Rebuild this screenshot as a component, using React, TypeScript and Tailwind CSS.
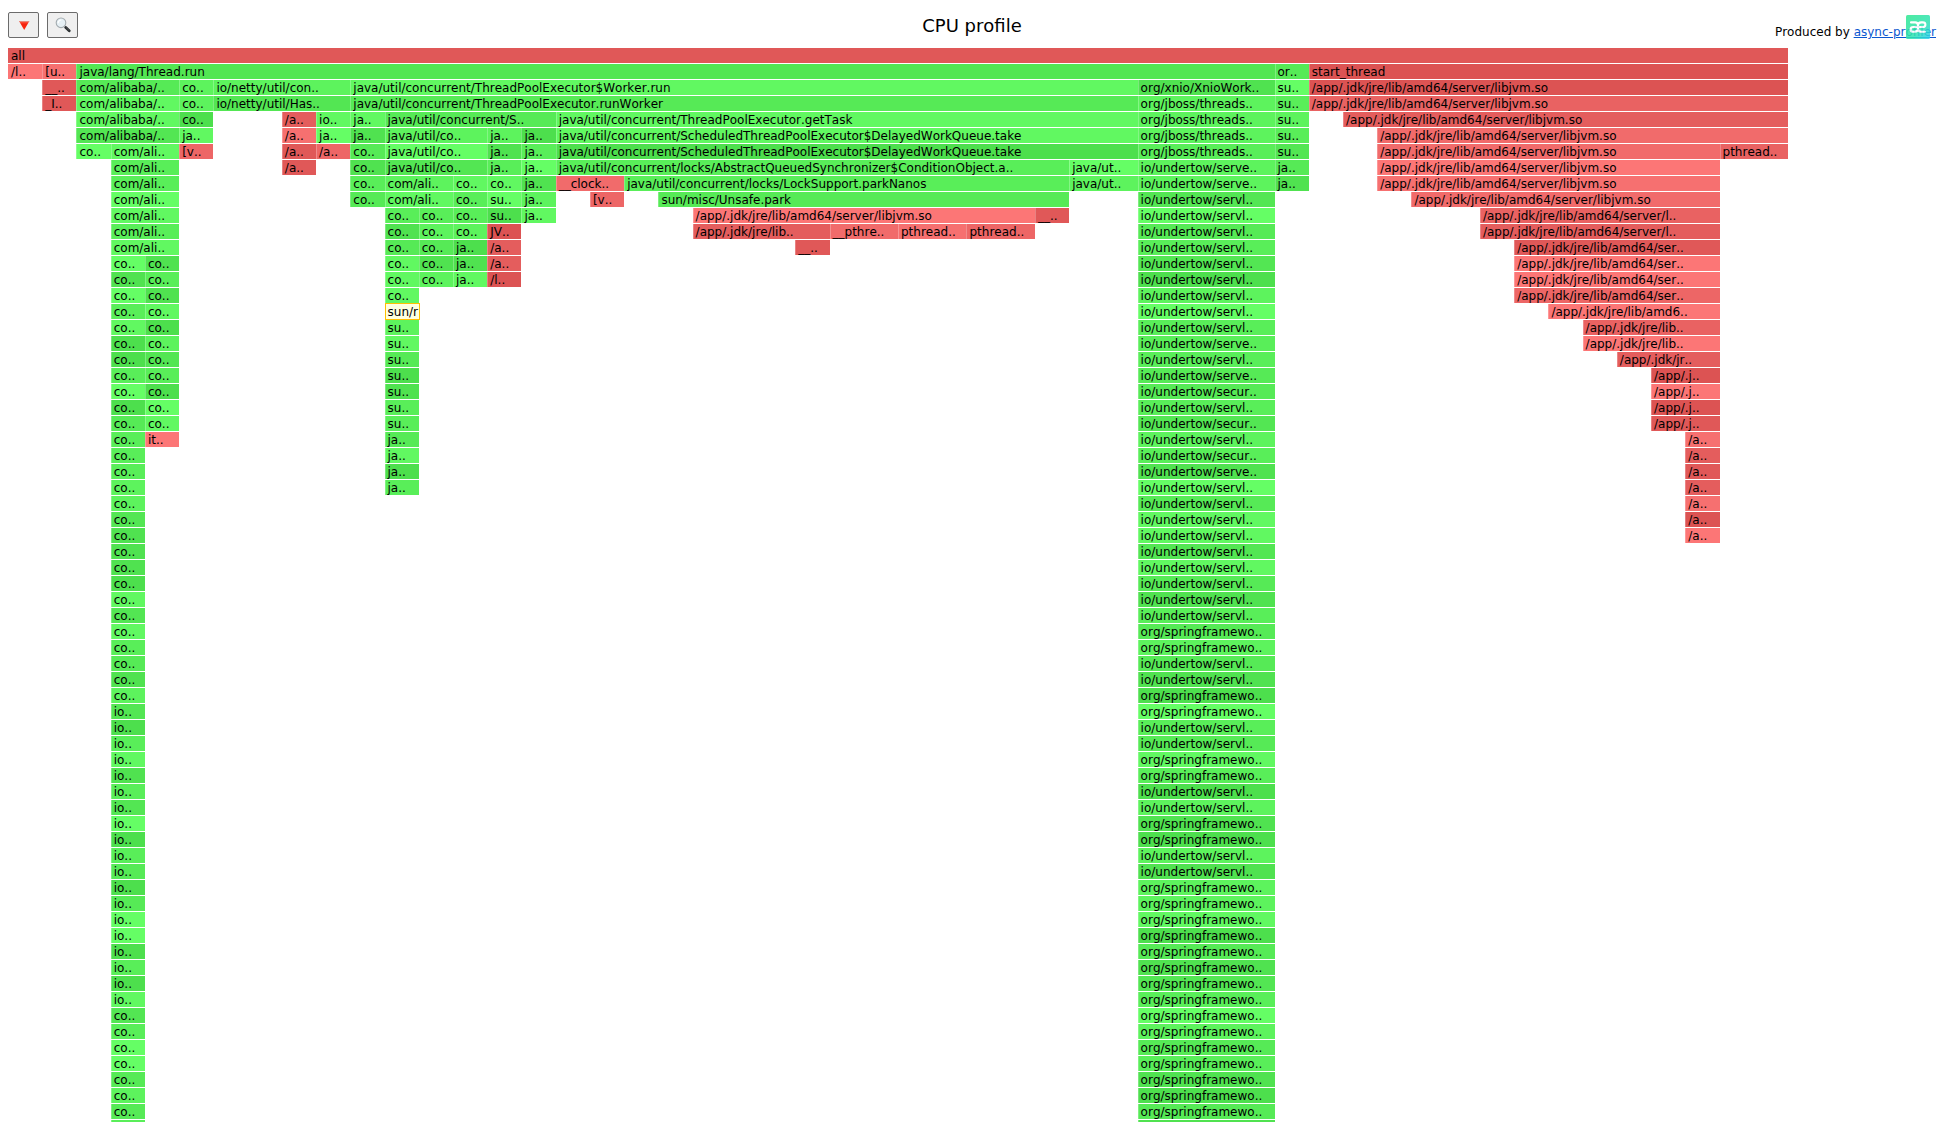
import React from "react";

type Frame = [start: number, end: number, tone: keyof typeof TONES, label: string];

const TONES = {
  g0: "bg-[#4ddf4d]",
  g1: "bg-[#50e250]",
  g2: "bg-[#53e653]",
  g3: "bg-[#56ea56]",
  g4: "bg-[#59ee59]",
  g5: "bg-[#5df35d]",
  g6: "bg-[#61f861]",
  g7: "bg-[#65fe65]",
  r0: "bg-[#dc5353]",
  r1: "bg-[#e05858]",
  r2: "bg-[#e45d5d]",
  r3: "bg-[#e96262]",
  r4: "bg-[#ed6666]",
  r5: "bg-[#f16b6b]",
  r6: "bg-[#f67070]",
  r7: "bg-[#fc7676]",
  hl: "bg-[#ffffe0]",
};

const SAMPLES = 52;
const JVM = "/app/.jdk/jre/lib/amd64/server/libjvm.so";
const SERVL = "io/undertow/servl..";
const SERVE = "io/undertow/serve..";
const SECUR = "io/undertow/secur..";
const SPRING = "org/springframewo..";
const JBOSS = "org/jboss/threads..";
const TAKE = "java/util/concurrent/ScheduledThreadPoolExecutor$DelayedWorkQueue.take";

const TOP_ROWS: Frame[][] = [
  [[0, 52, "r1", "all"]],
  [[0, 1, "r7", "/l.."], [1, 2, "r6", "[u.."], [2, 37, "g2", "java/lang/Thread.run"], [37, 38, "g3", "or.."], [38, 52, "r0", "start_thread"]],
  [[1, 2, "r1", "__.."], [2, 5, "g3", "com/alibaba/.."], [5, 6, "g5", "co.."], [6, 10, "g5", "io/netty/util/con.."], [10, 33, "g6", "java/util/concurrent/ThreadPoolExecutor$Worker.run"], [33, 37, "g1", "org/xnio/XnioWork.."], [37, 38, "g7", "su.."], [38, 52, "r0", JVM]],
  [[1, 2, "r1", "_I.."], [2, 5, "g6", "com/alibaba/.."], [5, 6, "g5", "co.."], [6, 10, "g2", "io/netty/util/Has.."], [10, 33, "g3", "java/util/concurrent/ThreadPoolExecutor.runWorker"], [33, 37, "g5", JBOSS], [37, 38, "g4", "su.."], [38, 52, "r3", JVM]],
  [[2, 5, "g6", "com/alibaba/.."], [5, 6, "g0", "co.."], [8, 9, "r2", "/a.."], [9, 10, "g6", "io.."], [10, 11, "g6", "ja.."], [11, 16, "g3", "java/util/concurrent/S.."], [16, 33, "g6", "java/util/concurrent/ThreadPoolExecutor.getTask"], [33, 37, "g5", JBOSS], [37, 38, "g5", "su.."], [39, 52, "r2", JVM]],
  [[2, 5, "g2", "com/alibaba/.."], [5, 6, "g6", "ja.."], [8, 9, "r6", "/a.."], [9, 10, "g7", "ja.."], [10, 11, "g1", "ja.."], [11, 14, "g5", "java/util/co.."], [14, 15, "g5", "ja.."], [15, 16, "g0", "ja.."], [16, 33, "g6", TAKE], [33, 37, "g5", JBOSS], [37, 38, "g4", "su.."], [40, 52, "r5", JVM]],
  [[2, 3, "g7", "co.."], [3, 5, "g6", "com/ali.."], [5, 6, "r4", "[v.."], [8, 9, "r1", "/a.."], [9, 10, "r4", "/a.."], [10, 11, "g3", "co.."], [11, 14, "g7", "java/util/co.."], [14, 15, "g1", "ja.."], [15, 16, "g4", "ja.."], [16, 33, "g0", TAKE], [33, 37, "g4", JBOSS], [37, 38, "g2", "su.."], [40, 50, "r5", JVM], [50, 52, "r3", "pthread.."]],
  [[3, 5, "g4", "com/ali.."], [8, 9, "r1", "/a.."], [10, 11, "g1", "co.."], [11, 14, "g2", "java/util/co.."], [14, 15, "g4", "ja.."], [15, 16, "g7", "ja.."], [16, 31, "g4", "java/util/concurrent/locks/AbstractQueuedSynchronizer$ConditionObject.a.."], [31, 33, "g7", "java/ut.."], [33, 37, "g5", SERVE], [37, 38, "g3", "ja.."], [40, 50, "r7", JVM]],
  [[3, 5, "g4", "com/ali.."], [10, 11, "g4", "co.."], [11, 13, "g5", "com/ali.."], [13, 14, "g6", "co.."], [14, 15, "g6", "co.."], [15, 16, "g1", "ja.."], [16, 18, "r5", "__clock.."], [18, 31, "g4", "java/util/concurrent/locks/LockSupport.parkNanos"], [31, 33, "g5", "java/ut.."], [33, 37, "g5", SERVE], [37, 38, "g1", "ja.."], [40, 50, "r6", JVM]],
  [[3, 5, "g7", "com/ali.."], [10, 11, "g3", "co.."], [11, 13, "g6", "com/ali.."], [13, 14, "g4", "co.."], [14, 15, "g7", "su.."], [15, 16, "g5", "ja.."], [17, 18, "r4", "[v.."], [19, 31, "g3", "sun/misc/Unsafe.park"], [33, 37, "g2", SERVL], [41, 50, "r5", JVM]],
  [[3, 5, "g6", "com/ali.."], [11, 12, "g4", "co.."], [12, 13, "g4", "co.."], [13, 14, "g4", "co.."], [14, 15, "g0", "su.."], [15, 16, "g6", "ja.."], [20, 30, "r7", JVM], [30, 31, "r1", "__.."], [33, 37, "g7", SERVL], [43, 50, "r3", "/app/.jdk/jre/lib/amd64/server/l.."]],
  [[3, 5, "g4", "com/ali.."], [11, 12, "g1", "co.."], [12, 13, "g5", "co.."], [13, 14, "g5", "co.."], [14, 15, "r0", "JV.."], [20, 24, "r2", "/app/.jdk/jre/lib.."], [24, 26, "r5", "__pthre.."], [26, 28, "r6", "pthread.."], [28, 30, "r4", "pthread.."], [33, 37, "g3", SERVL], [43, 50, "r2", "/app/.jdk/jre/lib/amd64/server/l.."]],
  [[3, 5, "g6", "com/ali.."], [11, 12, "g3", "co.."], [12, 13, "g3", "co.."], [13, 14, "g0", "ja.."], [14, 15, "r2", "/a.."], [23, 24, "r1", "__.."], [33, 37, "g4", SERVL], [44, 50, "r1", "/app/.jdk/jre/lib/amd64/ser.."]],
  [[3, 4, "g7", "co.."], [4, 5, "g1", "co.."], [11, 12, "g6", "co.."], [12, 13, "g1", "co.."], [13, 14, "g1", "ja.."], [14, 15, "r2", "/a.."], [33, 37, "g2", SERVL], [44, 50, "r7", "/app/.jdk/jre/lib/amd64/ser.."]],
  [[3, 4, "g1", "co.."], [4, 5, "g4", "co.."], [11, 12, "g6", "co.."], [12, 13, "g5", "co.."], [13, 14, "g6", "ja.."], [14, 15, "r0", "/l.."], [33, 37, "g0", SERVL], [44, 50, "r7", "/app/.jdk/jre/lib/amd64/ser.."]],
  [[3, 4, "g7", "co.."], [4, 5, "g1", "co.."], [11, 12, "g6", "co.."], [33, 37, "g5", SERVL], [44, 50, "r4", "/app/.jdk/jre/lib/amd64/ser.."]],
  [[3, 4, "g4", "co.."], [4, 5, "g6", "co.."], [11, 12, "hl", "sun/r"], [33, 37, "g7", SERVL], [45, 50, "r7", "/app/.jdk/jre/lib/amd6.."]],
  [[3, 4, "g6", "co.."], [4, 5, "g0", "co.."], [11, 12, "g5", "su.."], [33, 37, "g4", SERVL], [46, 50, "r3", "/app/.jdk/jre/lib.."]],
  [[3, 4, "g0", "co.."], [4, 5, "g5", "co.."], [11, 12, "g6", "su.."], [33, 37, "g4", SERVE], [46, 50, "r7", "/app/.jdk/jre/lib.."]],
  [[3, 4, "g0", "co.."], [4, 5, "g2", "co.."], [11, 12, "g3", "su.."], [33, 37, "g4", SERVL], [47, 50, "r2", "/app/.jdk/jr.."]],
  [[3, 4, "g4", "co.."], [4, 5, "g4", "co.."], [11, 12, "g0", "su.."], [33, 37, "g3", SERVE], [48, 50, "r0", "/app/.j.."]],
  [[3, 4, "g7", "co.."], [4, 5, "g0", "co.."], [11, 12, "g1", "su.."], [33, 37, "g3", SECUR], [48, 50, "r7", "/app/.j.."]],
  [[3, 4, "g0", "co.."], [4, 5, "g7", "co.."], [11, 12, "g4", "su.."], [33, 37, "g4", SERVL], [48, 50, "r0", "/app/.j.."]],
  [[3, 4, "g3", "co.."], [4, 5, "g6", "co.."], [11, 12, "g4", "su.."], [33, 37, "g2", SECUR], [48, 50, "r1", "/app/.j.."]],
  [[3, 4, "g4", "co.."], [4, 5, "r7", "it.."], [11, 12, "g3", "ja.."], [33, 37, "g5", SERVL], [49, 50, "r6", "/a.."]],
  [[3, 4, "g4", "co.."], [11, 12, "g6", "ja.."], [33, 37, "g4", SECUR], [49, 50, "r2", "/a.."]],
  [[3, 4, "g4", "co.."], [11, 12, "g0", "ja.."], [33, 37, "g1", SERVE], [49, 50, "r1", "/a.."]],
  [[3, 4, "g5", "co.."], [11, 12, "g4", "ja.."], [33, 37, "g7", SERVL], [49, 50, "r2", "/a.."]],
  [[3, 4, "g5", "co.."], [33, 37, "g3", SERVL], [49, 50, "r6", "/a.."]],
  [[3, 4, "g2", "co.."], [33, 37, "g6", SERVL], [49, 50, "r0", "/a.."]],
  [[3, 4, "g1", "co.."], [33, 37, "g6", SERVL], [49, 50, "r7", "/a.."]],
];

// Below the last native frame only two stacks continue downwards.
const DEEP: [keyof typeof TONES, string, keyof typeof TONES, string][] = [
  ["g1", "co..", "g2", SERVL],
  ["g1", "co..", "g6", SERVL],
  ["g0", "co..", "g3", SERVL],
  ["g6", "co..", "g1", SERVL],
  ["g2", "co..", "g4", SERVL],
  ["g6", "co..", "g3", SPRING],
  ["g4", "co..", "g5", SPRING],
  ["g3", "co..", "g3", SERVL],
  ["g1", "co..", "g1", SERVL],
  ["g5", "co..", "g0", SPRING],
  ["g2", "io..", "g7", SPRING],
  ["g0", "io..", "g4", SERVL],
  ["g4", "io..", "g3", SERVL],
  ["g6", "io..", "g6", SPRING],
  ["g1", "io..", "g4", SPRING],
  ["g4", "io..", "g0", SERVL],
  ["g2", "io..", "g5", SERVL],
  ["g7", "io..", "g1", SPRING],
  ["g0", "io..", "g0", SPRING],
  ["g4", "io..", "g5", SERVL],
  ["g3", "io..", "g1", SERVL],
  ["g0", "io..", "g5", SPRING],
  ["g3", "io..", "g5", SPRING],
  ["g7", "io..", "g6", SPRING],
  ["g7", "io..", "g0", SPRING],
  ["g0", "io..", "g3", SPRING],
  ["g4", "io..", "g1", SPRING],
  ["g0", "io..", "g2", SPRING],
  ["g6", "io..", "g4", SPRING],
  ["g2", "co..", "g7", SPRING],
  ["g4", "co..", "g5", SPRING],
  ["g7", "co..", "g3", SPRING],
  ["g7", "co..", "g4", SPRING],
  ["g3", "co..", "g1", SPRING],
  ["g5", "co..", "g0", SPRING],
  ["g3", "co..", "g3", SPRING],
  ["g4", "", "g1", ""],
];

const ROWS: Frame[][] = [
  ...TOP_ROWS,
  ...DEEP.map(([a, left, b, right]): Frame[] => [[3, 4, a, left], [33, 37, b, right]]),
];

function FrameCell({ frame: [start, end, tone, label] }: { frame: Frame }) {
  const position = { gridColumn: `${start + 1} / ${end + 1}` };
  if (tone === "hl") {
    return (
      <div
        style={position}
        className="z-10 -mr-px -mt-px h-[17px] overflow-hidden whitespace-nowrap border border-[#ffc000] bg-[#ffffe0] pl-[2px] leading-[17px]"
      >
        {label}
      </div>
    );
  }
  const edge = start === 0 ? "border-transparent" : "border-white/25";
  return (
    <div
      style={position}
      className={`h-[15px] overflow-hidden whitespace-nowrap border-l pl-[2px] leading-[17px] ${edge} ${TONES[tone]}`}
    >
      {label}
    </div>
  );
}

function ToolButton({ label, children }: { label: string; children: React.ReactNode }) {
  return (
    <button
      type="button"
      aria-label={label}
      className="flex h-[26px] w-[31px] items-center justify-center rounded-[2px] border border-[#6b6b6b] bg-[#efefef]"
    >
      {children}
    </button>
  );
}

function TriangleIcon() {
  return (
    <svg width="14" height="14" viewBox="0 0 14 14" aria-hidden="true">
      <defs>
        <linearGradient id="tri" x1="0" y1="0" x2="0" y2="1">
          <stop offset="0" stopColor="#ff6a55" />
          <stop offset="0.35" stopColor="#f5220c" />
          <stop offset="1" stopColor="#ff2a10" />
        </linearGradient>
      </defs>
      <path d="M2 3h10.4L7.2 12z" fill="url(#tri)" />
      <path d="M2 3h10.4l-.5.9H2.5z" fill="#e8897c" />
    </svg>
  );
}

function SearchIcon() {
  return (
    <svg width="16" height="16" viewBox="0 0 16 16" aria-hidden="true">
      <path d="M9.6 9.4l1.6 1.6" stroke="#8a9094" strokeWidth="1.6" />
      <path d="M10.8 10.6l3.4 3.2" stroke="#2b2f31" strokeWidth="2.8" strokeLinecap="round" />
      <path d="M11.2 10.6l3 2.8" stroke="#5d6366" strokeWidth="0.7" />
      <circle cx="6" cy="5.8" r="4.8" fill="#e6f0f5" stroke="#a3abaf" strokeWidth="1.1" />
      <path d="M3.2 5.6a3 3 0 0 1 2.6-2.6" fill="none" stroke="#ffffff" strokeWidth="1.2" strokeLinecap="round" />
    </svg>
  );
}

function Badge() {
  return (
    <svg
      width="24"
      height="24"
      viewBox="0 0 24 24"
      className="pointer-events-none absolute right-[10px] top-[15px] opacity-85"
      aria-hidden="true"
    >
      <defs>
        <linearGradient id="badge" x1="0" y1="0" x2="1" y2="1">
          <stop offset="0" stopColor="#30e890" />
          <stop offset="0.6" stopColor="#2fe3b2" />
          <stop offset="1" stopColor="#2ccff0" />
        </linearGradient>
      </defs>
      <rect width="24" height="24" rx="1.5" fill="url(#badge)" />
      <path
        d="M5 7.4h4.2c2 0 2.8 1.2 2.8 3.2v3c0 2-1.2 3.2-3.4 3.2H7.4c-1.8 0-2.8-1-2.8-2.4s1-2.4 2.800-2.400h9.200c1.800 0 2.800-.9 2.800-2.300s-1-2.300-2.600-2.300h-1.600c-2 0-3.200 1.200-3.200 3.200v3c0 2 1 3.200 3 3.200h4"
        fill="none"
        stroke="#ffffff"
        strokeWidth="2.1"
        strokeLinecap="round"
      />
    </svg>
  );
}

export default function App() {
  return (
    <div className="relative h-screen overflow-hidden bg-white font-['DejaVu_Sans',Verdana,sans-serif] text-xs text-black [font-kerning:none]">
      <header className="grid h-12 grid-cols-[1fr_auto_1fr] items-start pl-2 pr-1">
        <div className="flex gap-2 pt-3">
          <ToolButton label="Invert">
            <TriangleIcon />
          </ToolButton>
          <ToolButton label="Search">
            <SearchIcon />
          </ToolButton>
        </div>
        <h1 className="pt-3 text-lg leading-7">CPU profile</h1>
        <p className="pt-6 text-right leading-4">
          Produced by{" "}
          <a href="#async-profiler" className="text-[#0b57d0] underline">
            async-profiler
          </a>
        </p>
      </header>
      <Badge />
      <main className="ml-2 mr-[152px]">
        {ROWS.map((row, depth) => (
          <div
            key={depth}
            className="grid h-4"
            style={{ gridTemplateColumns: `repeat(${SAMPLES}, minmax(0, 1fr))` }}
          >
            {row.map((frame) => (
              <FrameCell key={frame[0]} frame={frame} />
            ))}
          </div>
        ))}
      </main>
    </div>
  );
}
